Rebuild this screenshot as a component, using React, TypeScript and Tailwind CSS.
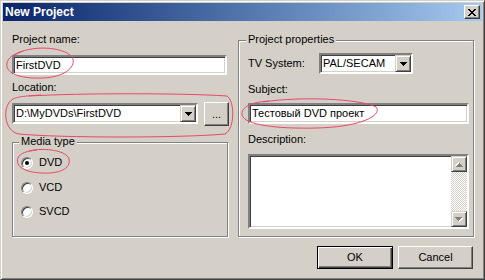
import React from "react";

const sunken =
  "border-2 border-t-[#808080] border-l-[#808080] border-b-white border-r-white shadow-[inset_1px_1px_0_#404040,inset_-1px_-1px_0_#d4d0c8]";
const raised =
  "border border-t-white border-l-white border-b-[#404040] border-r-[#404040] shadow-[inset_-1px_-1px_0_#808080]";
const etched = "border border-[#808080] shadow-[inset_1px_1px_0_#fff,1px_1px_0_#fff]";

const DownArrow: React.FC<{ color?: string }> = ({ color = "#000" }) => (
  <svg width="7" height="4" viewBox="0 0 7 4" shapeRendering="crispEdges">
    <path d="M0 0h7v1H0zM1 1h5v1H1zM2 2h3v1H2zM3 3h1v1H3z" fill={color} />
  </svg>
);

const GrayArrow: React.FC<{ up?: boolean }> = ({ up }) => (
  <svg width="8" height="5" viewBox="0 0 8 5" shapeRendering="crispEdges" className={up ? "rotate-180" : ""}>
    <path d="M1 1h7v1H1zM2 2h5v1H2zM3 3h3v1H3zM4 4h1v1H4z" fill="#fff" />
    <path d="M0 0h7v1H0zM1 1h5v1H1zM2 2h3v1H2zM3 3h1v1H3z" fill="#808080" />
  </svg>
);

const DropButton = () => (
  <div className="w-[16px] h-[17px] flex items-center justify-center bg-[#d4d0c8] border border-t-[#d4d0c8] border-l-[#d4d0c8] border-b-[#404040] border-r-[#404040] shadow-[inset_1px_1px_0_#fff,inset_-1px_-1px_0_#808080]">
    <DownArrow />
  </div>
);

const Combo: React.FC<{ value: string; width: string }> = ({ value, width }) => (
  <div className={`${sunken} ${width} h-[21px] bg-white flex items-center`}>
    <span className="flex-1 pl-[2px] leading-[13px] whitespace-nowrap">{value}</span>
    <DropButton />
  </div>
);

const Radio: React.FC<{ label: string; checked?: boolean }> = ({ label, checked }) => (
  <div className="flex items-center h-[13px]">
    <div className="w-[12px] h-[12px] rounded-full bg-white border border-t-[#808080] border-l-[#808080] border-b-white border-r-white shadow-[inset_1px_1px_0_#404040,inset_-1px_-1px_0_#d4d0c8] flex items-center justify-center">
      {checked && <div className="w-[4px] h-[4px] rounded-full bg-black" />}
    </div>
    <span className="ml-[6px] leading-[13px]">{label}</span>
  </div>
);

export default function App() {
  return (
    <div className="relative w-[485px] h-[280px] bg-[#d4d0c8] border border-t-[#d4d0c8] border-l-[#d4d0c8] border-b-[#404040] border-r-[#404040] shadow-[inset_1px_1px_0_#fff,inset_-1px_-1px_0_#808080] p-[2px] text-[11px] text-black font-['Liberation_Sans',Arial,sans-serif]">
      {/* title bar */}
      <div className="h-[18px] bg-linear-to-r from-[#0a246a] to-[#a6caf0] flex items-center justify-between pl-[2px] pr-[2px]">
        <span className="text-white font-bold text-[12px] leading-[14px]">New Project</span>
        <div className={`${raised} w-[16px] h-[14px] bg-[#d4d0c8] flex items-center justify-center`}>
          <svg width="8" height="7" viewBox="0 0 8 7" shapeRendering="crispEdges">
            <path
              d="M0 0h2v1H0zM6 0h2v1H6zM1 1h2v1H1zM5 1h2v1H5zM2 2h4v1H2zM3 3h2v1H3zM2 4h4v1H2zM1 5h2v1H1zM5 5h2v1H5zM0 6h2v1H0zM6 6h2v1H6z"
              fill="#000"
            />
          </svg>
        </div>
      </div>

      <div className="flex items-start pl-[9px]">
        {/* left column */}
        <div className="w-[217px] pt-[12px] flex flex-col">
          <span className="leading-[13px]">Project name:</span>
          <div className={`${sunken} mt-[9px] w-[215px] h-[20px] bg-white flex items-center pl-[2px]`}>
            <span className="leading-[13px]">FirstDVD</span>
          </div>
          <span className="mt-[6px] leading-[13px]">Location:</span>
          <div className="mt-[8px] flex items-start justify-between">
            <div className="mt-[1px]">
              <Combo value="D:\MyDVDs\FirstDVD" width="w-[186px]" />
            </div>
            <button className={`${raised} w-[25px] h-[24px] bg-[#d4d0c8] flex items-center justify-center leading-[13px]`}>
              ...
            </button>
          </div>
          <div className={`${etched} relative mt-[16px] w-[216px] h-[95px] pl-[8px] pt-[13px] flex flex-col`}>
            <span className="absolute left-[6px] top-[-8px] px-[2px] bg-[#d4d0c8] leading-[13px]">Media type</span>
            <Radio label="DVD" checked />
            <div className="mt-[12px]">
              <Radio label="VCD" />
            </div>
            <div className="mt-[11px]">
              <Radio label="SVCD" />
            </div>
          </div>
        </div>

        {/* right group */}
        <div className={`${etched} relative ml-[9px] mt-[19px] w-[236px] h-[197px] pl-[9px] pt-[12px] flex flex-col`}>
          <span className="absolute left-[7px] top-[-8px] px-[2px] bg-[#d4d0c8] leading-[13px]">Project properties</span>
          <div className="flex items-center">
            <span className="w-[71px] leading-[13px]">TV System:</span>
            <Combo value="PAL/SECAM" width="w-[94px]" />
          </div>
          <span className="mt-[9px] leading-[13px]">Subject:</span>
          <div className={`${sunken} mt-[7px] w-[221px] h-[21px] bg-white flex items-center pl-[2px]`}>
            <span className="leading-[13px]">Тестовый DVD проект</span>
          </div>
          <span className="mt-[9px] leading-[13px]">Description:</span>
          <div className={`${sunken} mt-[8px] w-[221px] h-[75px] bg-white flex`}>
            <div className="flex-1" />
            <div className="w-[16px] flex flex-col">
              <div className="h-[16px] bg-[#d4d0c8] flex items-center justify-center border border-t-[#d4d0c8] border-l-[#d4d0c8] border-b-[#404040] border-r-[#404040] shadow-[inset_1px_1px_0_#fff,inset_-1px_-1px_0_#808080]">
                <GrayArrow up />
              </div>
              <div className="flex-1 bg-[repeating-conic-gradient(#d4d0c8_0_25%,#ffffff_0_50%)] bg-[length:2px_2px]" />
              <div className="h-[16px] bg-[#d4d0c8] flex items-center justify-center border border-t-[#d4d0c8] border-l-[#d4d0c8] border-b-[#404040] border-r-[#404040] shadow-[inset_1px_1px_0_#fff,inset_-1px_-1px_0_#808080]">
                <GrayArrow />
              </div>
            </div>
          </div>
        </div>
      </div>

      {/* buttons */}
      <div className="mt-[9px] flex justify-end pr-[9px] gap-[5px]">
        <button className="w-[76px] h-[23px] bg-[#d4d0c8] border border-black shadow-[inset_1px_1px_0_#fff,inset_-1px_-1px_0_#404040,inset_-2px_-2px_0_#808080] leading-[13px]">
          OK
        </button>
        <button className={`${raised} w-[75px] h-[23px] bg-[#d4d0c8] leading-[13px]`}>Cancel</button>
      </div>

      {/* red hand-drawn annotations */}
      <svg className="absolute left-0 top-0 pointer-events-none" width="485" height="280" fill="none">
        <g stroke="#e8486a" strokeWidth="1">
          <path d="M14 54 C28 44, 62 45, 71 56 C76 64, 66 76, 42 77 C18 78, 4 72, 6 62 C7 57, 12 53, 22 50" />
          <path d="M28 95 C80 92, 180 92, 226 95 C234 100, 234 128, 224 133 C180 137, 60 137, 18 133 C2 130, 1 104, 12 98 C16 96, 22 95, 40 94" />
          <path d="M28 150 C45 146, 66 150, 68 158 C70 168, 58 173, 40 172 C24 171, 14 166, 17 157 C19 152, 26 150, 36 149" />
          <path d="M262 101 C300 95, 360 98, 375 106 C382 114, 360 126, 316 127 C275 128, 244 124, 241 114 C240 106, 250 101, 268 100" />
        </g>
      </svg>
    </div>
  );
}
